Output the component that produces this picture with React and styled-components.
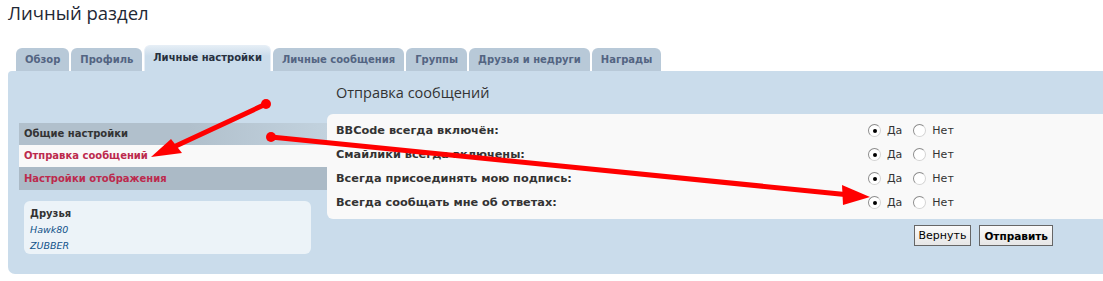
import React from "react";
import styled, { createGlobalStyle } from "styled-components";

const GlobalStyle = createGlobalStyle`
    html, body {
        margin: 0;
        padding: 0;
        background: #ffffff;
        font-family: "DejaVu Sans", Verdana, sans-serif;
        color: #333333;
        overflow: hidden;
    }
`;

const Page = styled.div`
    position: relative;
    width: 1103px;
    height: 281px;
    padding: 0 0 0 8px;
    box-sizing: border-box;
`;

const Title = styled.h2`
    margin: 0;
    padding-top: 1px;
    height: 43px;
    font-family: "Open Sans", "DejaVu Sans", sans-serif;
    font-weight: 400;
    font-size: 18.5px;
    line-height: 24px;
    color: #1f2835;
`;

const Tabs = styled.div`
    display: flex;
    align-items: flex-end;
    gap: 2px;
    height: 27px;
    padding-left: 8px;
`;

const Tab = styled.div`
    height: ${(p) => (p.$active ? "26px" : "23px")};
    padding: 0 ${(p) => (p.$active ? "8px" : "9px")};
    padding-bottom: ${(p) => (p.$active ? "2px" : "0")};
    display: flex;
    align-items: center;
    box-sizing: border-box;
    border-radius: 6px 6px 0 0;
    background: ${(p) =>
        p.$active ? "linear-gradient(#e4edf5, #cadceb 40%)" : "#b8c9d8"};
    border: ${(p) => (p.$active ? "1px solid #e6eef6" : "none")};
    border-bottom: none;
    font-size: 10px;
    font-weight: bold;
    color: ${(p) => (p.$active ? "#28313f" : "#536482")};
    white-space: nowrap;
`;

const Panel = styled.div`
    display: grid;
    grid-template-columns: 308px 1fr;
    height: 203px;
    padding-left: 11px;
    background: #cadceb;
    border-radius: 4px 0 0 7px;
`;

const Side = styled.div`
    padding-top: 52px;
`;

const NavItem = styled.div`
    height: ${(p) => p.$h}px;
    line-height: ${(p) => p.$h}px;
    padding-left: 5px;
    font-size: 10px;
    font-weight: bold;
    color: ${(p) => (p.$header ? "#333333" : "#bc2a4d")};
    background: ${(p) =>
        p.$current
            ? "#f9f9f9"
            : p.$header
            ? "linear-gradient(to right, #b1c0cc 55%, #c2d2de)"
            : "#abbac6"};
`;

const Friends = styled.div`
    margin: 11px 0 0 5px;
    width: 287px;
    height: 53px;
    box-sizing: border-box;
    padding: 5px 6px;
    background: #ecf3f8;
    border-radius: 6px;
    font-size: 10px;
    line-height: 16px;
`;

const FriendsTitle = styled.div`
    font-weight: bold;
    color: #333333;
`;

const Friend = styled.div`
    font-style: italic;
    color: #105289;
    font-family: "DejaVu Sans", Verdana, sans-serif;
    font-size: 9.5px;
`;

const Main = styled.div`
    display: flex;
    flex-direction: column;
`;

const Heading = styled.h3`
    margin: 0;
    height: 43px;
    padding: 12px 0 0 9px;
    box-sizing: border-box;
    font-family: "Open Sans", "DejaVu Sans", sans-serif;
    font-weight: 400;
    font-size: 14.5px;
    line-height: 20px;
    color: #333333;
`;

const Box = styled.div`
    background: #f9f9f9;
    border-radius: 6px 0 0 6px;
    height: 105px;
    padding-top: 4px;
    box-sizing: border-box;
`;

const Row = styled.div`
    display: flex;
    align-items: center;
    height: 24px;
    padding-left: 9px;
`;

const Label = styled.div`
    width: 532px;
    font-size: 11.3px;
    font-weight: bold;
    color: #333333;
`;

const Radio = styled.span`
    display: inline-block;
    width: 11px;
    height: 11px;
    border-radius: 50%;
    border: 1px solid #8c8c8c;
    border-right-color: #d4d4d4;
    border-bottom-color: #d4d4d4;
    background: #ffffff;
    position: relative;
    margin-right: 6px;
    &::after {
        content: "";
        display: ${(p) => (p.$checked ? "block" : "none")};
        position: absolute;
        left: 4px;
        top: 4px;
        width: 4px;
        height: 4px;
        border-radius: 50%;
        background: #000000;
    }
`;

const Option = styled.span`
    font-size: 11px;
    color: #333333;
    margin-right: 11px;
    font-family: "DejaVu Sans", Verdana, sans-serif;
`;

const Buttons = styled.div`
    display: flex;
    justify-content: flex-end;
    gap: 8px;
    padding: 6px 50px 0 0;
`;

const Button = styled.button`
    height: 21px;
    padding: 0 4px;
    border: 1px solid #666666;
    background: linear-gradient(#fbfbfb, #e6e6e6);
    font-family: "DejaVu Sans", Verdana, sans-serif;
    font-size: ${(p) => (p.$primary ? "10.5px" : "11px")};
    font-weight: ${(p) => (p.$primary ? "bold" : "normal")};
    color: #000000;
    cursor: pointer;
`;

const Overlay = styled.svg`
    position: absolute;
    left: 0;
    top: 0;
    pointer-events: none;
`;

const tabs = [
    "Обзор",
    "Профиль",
    "Личные настройки",
    "Личные сообщения",
    "Группы",
    "Друзья и недруги",
    "Награды",
];

const options = [
    "BBCode всегда включён:",
    "Смайлики всегда включены:",
    "Всегда присоединять мою подпись:",
    "Всегда сообщать мне об ответах:",
];

export default function App() {
    return (
        <Page>
            <GlobalStyle />
            <Title>Личный раздел</Title>
            <Tabs>
                {tabs.map((t) => (
                    <Tab key={t} $active={t === "Личные настройки"}>
                        {t}
                    </Tab>
                ))}
            </Tabs>
            <Panel>
                <Side>
                    <NavItem $header $h={22}>Общие настройки</NavItem>
                    <NavItem $current $h={22}>Отправка сообщений</NavItem>
                    <NavItem $h={23}>Настройки отображения</NavItem>
                    <Friends>
                        <FriendsTitle>Друзья</FriendsTitle>
                        <Friend>Hawk80</Friend>
                        <Friend>ZUBBER</Friend>
                    </Friends>
                </Side>
                <Main>
                    <Heading>Отправка сообщений</Heading>
                    <Box>
                        {options.map((o) => (
                            <Row key={o}>
                                <Label>{o}</Label>
                                <Radio $checked />
                                <Option>Да</Option>
                                <Radio />
                                <Option>Нет</Option>
                            </Row>
                        ))}
                    </Box>
                    <Buttons>
                        <Button>Вернуть</Button>
                        <Button $primary>Отправить</Button>
                    </Buttons>
                </Main>
            </Panel>
            <Overlay width="1103" height="281" viewBox="0 0 1103 281">
                <g fill="#ff0000" stroke="#ff0000" strokeLinecap="round">
                    <circle cx="266" cy="104" r="5" stroke="none" />
                    <line x1="266" y1="104" x2="165" y2="151" strokeWidth="5" />
                    <polygon points="151,157 171,139 182,153" stroke="none" />
                    <circle cx="271" cy="137" r="5" stroke="none" />
                    <line x1="271" y1="137" x2="850" y2="195" strokeWidth="5" />
                    <polygon points="870,197 842,185 843,205" stroke="none" />
                </g>
            </Overlay>
        </Page>
    );
}
